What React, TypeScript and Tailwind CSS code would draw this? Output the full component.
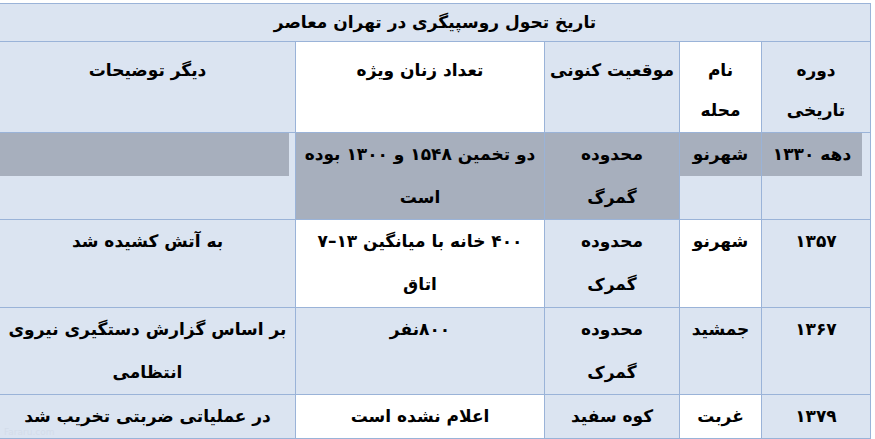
import React from 'react'

type Cell = {
  lines: string[]
  bg?: 'blue' | 'white' | 'grey'
  band?: string // grey highlight on first line only
}

const header: Cell[] = [
  { lines: ['دوره', 'تاریخی'] },
  { lines: ['نام', 'محله'], bg: 'white' },
  { lines: ['موقعیت کنونی'] },
  { lines: ['تعداد زنان ویژه'], bg: 'white' },
  { lines: ['دیگر توضیحات'] },
]

const rows: { h: string; cells: Cell[] }[] = [
  {
    h: 'h-[87px]',
    cells: [
      { lines: ['دهه ۱۳۳۰'], band: 'mr-[8px]' },
      { lines: ['شهرنو'], band: '' },
      { lines: ['محدوده', 'گمرگ'], bg: 'grey' },
      { lines: ['دو تخمین ۱۵۴۸ و ۱۳۰۰ بوده', 'است'], bg: 'grey' },
      { lines: [''], band: 'mr-[6px]' },
    ],
  },
  {
    h: 'h-[88px]',
    cells: [
      { lines: ['۱۳۵۷'] },
      { lines: ['شهرنو'], bg: 'white' },
      { lines: ['محدوده', 'گمرک'] },
      { lines: ['۴۰۰ خانه با میانگین ۱۳–۷', 'اتاق'], bg: 'white' },
      { lines: ['به آتش کشیده شد'] },
    ],
  },
  {
    h: 'h-[87px]',
    cells: [
      { lines: ['۱۳۶۷'] },
      { lines: ['جمشید'] },
      { lines: ['محدوده', 'گمرک'] },
      { lines: ['۸۰۰نفر'] },
      { lines: ['بر اساس گزارش دستگیری نیروی', 'انتظامی'] },
    ],
  },
  {
    h: 'h-[41px]',
    cells: [
      { lines: ['۱۳۷۹'] },
      { lines: ['غربت'], bg: 'white' },
      { lines: ['کوه سفید'] },
      { lines: ['اعلام نشده است'], bg: 'white' },
      { lines: ['در عملیاتی ضربتی تخریب شد'] },
    ],
  },
]

const bgClass = (bg?: string) =>
  bg === 'white' ? 'bg-white' : bg === 'grey' ? 'bg-[#a7afbd]' : 'bg-[#dbe4f1]'

function BodyCell({ cell }: { cell: Cell }) {
  return (
    <td className={`border border-[#9ab3d8] p-0 align-top text-center ${bgClass(cell.bg)}`}>
      {cell.lines.map((line, i) =>
        i === 0 && cell.band !== undefined ? (
          <div key={i} className={`h-[43px] leading-[43px] bg-[#a7afbd] ${cell.band}`}>
            {line}
          </div>
        ) : (
          <div key={i} className="h-[43px] leading-[43px]">
            {line}
          </div>
        )
      )}
    </td>
  )
}

export default function App() {
  return (
    <div
      className="relative w-[875px] h-[439px] overflow-hidden bg-white pt-[3px] text-[17px] font-bold text-black"
      style={{ fontFamily: '"DejaVu Sans", "Liberation Serif", serif' }}
    >
      <table dir="rtl" className="-ml-px w-[871px] table-fixed border-collapse">
        <colgroup>
          <col className="w-[109px]" />
          <col className="w-[82px]" />
          <col className="w-[135px]" />
          <col className="w-[249px]" />
          <col className="w-[296px]" />
        </colgroup>
        <tbody>
          <tr className="h-[38px]">
            <td colSpan={5} className="border border-[#9ab3d8] bg-[#dbe4f1] p-0 text-center align-middle text-[17px]">
              تاریخ تحول روسپیگری در تهران معاصر
            </td>
          </tr>
          <tr className="h-[91px]">
            {header.map((cell, i) => (
              <td key={i} className={`border border-[#9ab3d8] p-0 pt-[8px] align-top text-center ${bgClass(cell.bg)}`}>
                {cell.lines.map((line, j) => (
                  <div key={j} className="leading-[40px]">
                    {line}
                  </div>
                ))}
              </td>
            ))}
          </tr>
          {rows.map((row, r) => (
            <tr key={r} className={row.h}>
              {row.cells.map((cell, i) => (
                <BodyCell key={i} cell={cell} />
              ))}
            </tr>
          ))}
        </tbody>
      </table>
      <span className="absolute left-[4px] top-[427px] text-[9px] leading-[10px] font-normal text-[#d3dcea]">Fararu.com</span>
    </div>
  )
}
